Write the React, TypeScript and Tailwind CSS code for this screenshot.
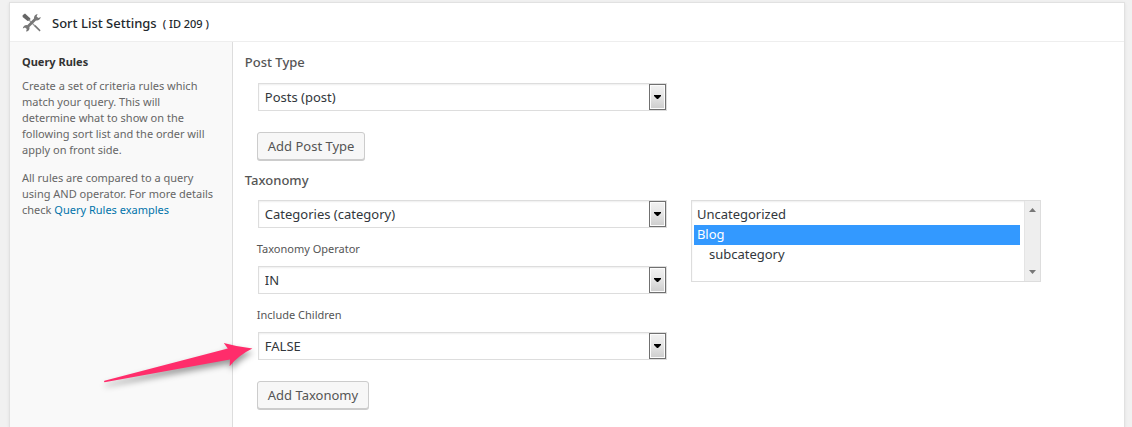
import { useState } from "react";
import type { ReactNode } from "react";

function ToolsIcon() {
  return (
    <svg viewBox="0 0 20 20" className="size-5 shrink-0" aria-hidden="true">
      <path d="M.6 2.2 3 .4 8.4 5.4 8 7.4 5.6 8 .6 4Z" fill="#666" />
      <path d="M6.6 6.6 13 13" stroke="#999" strokeWidth="1.2" />
      <path d="M12.2 13.2 13.4 12 18.6 17.2 17.6 18.4Z" fill="#777" />
      <path
        d="M15.6 1A4 4 0 0 0 12 5.6L5.2 12.2A3.6 3.6 0 0 0 .8 15.4L3 14.4 4.8 16 4 18.6A3.6 3.6 0 0 0 7.4 14L14 7.4A4 4 0 0 0 18.8 4L16.4 5 14.6 3.4Z"
        fill="#777"
      />
    </svg>
  );
}

function SelectField({ id, label, options, value }: { id: string; label?: string; options: string[]; value: string }) {
  const [current, setCurrent] = useState(value);
  return (
    <div className="relative">
      <select
        id={id}
        aria-label={label}
        value={current}
        onChange={(e) => setCurrent(e.target.value)}
        className="block h-7 w-full appearance-none border border-[#ddd] bg-white pt-0.5 pr-5 pl-1.5 text-[13px] text-[#32373c] shadow-[inset_0_1px_2px_rgba(0,0,0,0.07)]"
      >
        {options.map((o) => (
          <option key={o}>{o}</option>
        ))}
      </select>
      <span className="pointer-events-none absolute inset-y-px right-px flex w-[17px] items-center justify-center border border-[#707070] bg-linear-to-b from-[#f2f2f2] via-[#e4e4e4] to-[#cdcdcd] shadow-[inset_0_0_0_1px_#fcfcfc]">
        <svg viewBox="0 0 7 4" className="h-1 w-[7px]" aria-hidden="true">
          <path d="M0 0H7V1L4 4H3L0 1Z" fill="#000" />
        </svg>
      </span>
    </div>
  );
}

function SubField({ id, label, children }: { id: string; label: string; children: ReactNode }) {
  return (
    <div className="mt-[11px]">
      <label htmlFor={id} className="mb-[7px] -ml-px block text-[11px] leading-5 text-[#555]">
        {label}
      </label>
      {children}
    </div>
  );
}

function AddButton({ children }: { children: ReactNode }) {
  return (
    <button
      type="button"
      className="mt-[21px] -ml-px block h-7 rounded-[3px] border border-[#ccc] bg-[#f7f7f7] px-2.5 pt-0.5 text-[13px] text-[#555] shadow-[0_1px_0_#ccc]"
    >
      {children}
    </button>
  );
}

function CategoryList() {
  const [chosen, setChosen] = useState(["Blog"]);
  return (
    <div className="relative self-start">
      <select
        multiple
        size={4}
        aria-label="Categories"
        value={chosen}
        onChange={(e) => setChosen(Array.from(e.target.selectedOptions, (o) => o.value))}
        className="block h-[82px] w-full overflow-hidden border border-[#ddd] bg-white py-1 pr-5 pl-0.5 text-[13px] shadow-[inset_0_1px_2px_rgba(0,0,0,0.07)] [scrollbar-width:none]"
      >
        {["Uncategorized", "Blog", "subcategory"].map((name) => (
          <option
            key={name}
            value={name}
            className={
              (name === "subcategory" ? "pl-[15px]" : "pl-[3px]") +
              " h-5 min-h-5 py-0 leading-5 text-[#32373c] checked:bg-[linear-gradient(#39f,#39f)] checked:[-webkit-text-fill-color:#fff]"
            }
          >
            {name}
          </option>
        ))}
      </select>
      <span className="pointer-events-none absolute inset-y-px right-px flex w-4 flex-col items-center justify-between bg-[#eee] py-[7px] shadow-[inset_1px_0_0_#e4e4e4]">
        <svg viewBox="0 0 7 4" className="h-1 w-[7px]" aria-hidden="true">
          <path d="M0 4H7L3.5 0Z" fill="#777" />
        </svg>
        <svg viewBox="0 0 7 4" className="h-1 w-[7px]" aria-hidden="true">
          <path d="M0 0H7L3.5 4Z" fill="#777" />
        </svg>
      </span>
    </div>
  );
}

function PointerArrow() {
  return (
    <svg
      viewBox="0 0 160 50"
      className="pointer-events-none absolute top-[298px] left-[92px] h-[50px] w-40 overflow-visible drop-shadow-[1px_4px_3px_rgba(0,0,0,0.4)]"
      aria-hidden="true"
    >
      <path
        d="M2.4 40.8 125.8 8.4 121.8 3Q136 7 150.4 8.6 137 15 127.6 26.2L128 19.4 2.6 42.2Q1.4 41.8 2.4 40.8Z"
        fill="#ff2d6b"
      />
    </svg>
  );
}

export default function App() {
  return (
    <div className="flex min-h-screen flex-col bg-[#f1f1f1] pt-0.5 pr-[7px] pl-[9px] font-['Noto_Sans','Open_Sans',sans-serif]">
      <section className="flex grow flex-col border border-b-0 border-[#e1e1e1] bg-white shadow-[0_1px_3px_rgba(0,0,0,0.08)]">
        <header className="flex h-[39px] items-center gap-2.5 border-b border-[#eee] pt-0.5 pl-3">
          <ToolsIcon />
          <h1 className="flex items-baseline gap-1.5 pt-0.5 text-[13px] font-medium text-[#23282d]">
            Sort List Settings <small className="text-[11px]">( ID 209 )</small>
          </h1>
        </header>
        <div className="relative flex grow">
          <aside className="w-1/5 shrink-0 border-r border-[#ddd] bg-[#f9f9f9] pt-3 pr-[17px] pl-3 text-[11px] leading-4 text-[#666]">
            <h2 className="font-bold text-[#333]">Query Rules</h2>
            <p className="mt-2">
              Create a set of criteria rules which match your query. This will determine what to show on the following sort list and
              the order will apply on front side.
            </p>
            <p className="mt-3">
              All rules are compared to a query using AND operator. For more details check{" "}
              <a href="#examples" className="text-[#0073aa]">
                Query Rules examples
              </a>
            </p>
          </aside>
          <main className="grow pt-2.5 pr-[83px] pb-4 pl-3">
            <h3 className="text-[13px] leading-5 font-medium text-[#555]">Post Type</h3>
            <div className="mt-[11px] grid grid-cols-[409fr_350fr] gap-6 pl-[13px]">
              <div>
                <SelectField id="post-type" label="Post Type" value="Posts (post)" options={["Posts (post)", "Pages (page)"]} />
                <AddButton>Add Post Type</AddButton>
              </div>
            </div>
            <h3 className="mt-2.5 text-[13px] leading-5 font-medium text-[#555]">Taxonomy</h3>
            <div className="mt-2.5 grid grid-cols-[409fr_350fr] gap-6 pl-[13px]">
              <div>
                <SelectField
                  id="taxonomy"
                  label="Taxonomy"
                  value="Categories (category)"
                  options={["Categories (category)", "Tags (post_tag)"]}
                />
                <SubField id="operator" label="Taxonomy Operator">
                  <SelectField id="operator" value="IN" options={["IN", "NOT IN", "AND"]} />
                </SubField>
                <SubField id="children" label="Include Children">
                  <SelectField id="children" value="FALSE" options={["TRUE", "FALSE"]} />
                </SubField>
                <AddButton>Add Taxonomy</AddButton>
              </div>
              <CategoryList />
            </div>
          </main>
          <PointerArrow />
        </div>
      </section>
    </div>
  );
}
